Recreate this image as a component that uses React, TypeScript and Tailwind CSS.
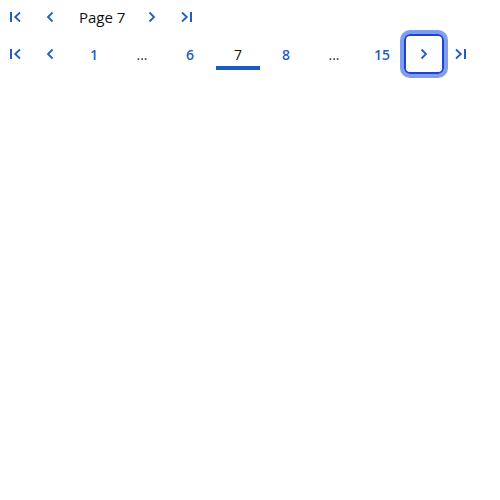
import React from "react";

const BLUE = "#1f5fc4";

function Chev({ dir, bar }: { dir: "left" | "right"; bar?: boolean }) {
  return (
    <svg width="16" height="16" viewBox="0 0 16 16" fill="none">
      {dir === "left" ? (
        <>
          {bar && <line x1="3" y1="3" x2="3" y2="13" stroke={BLUE} strokeWidth="2" />}
          <polyline
            points={bar ? "12,3.5 7.2,8 12,12.5" : "10.5,3.5 6,8 10.5,12.5"}
            stroke={BLUE}
            strokeWidth="1.8"
            fill="none"
          />
        </>
      ) : (
        <>
          <polyline
            points={bar ? "4,3.5 8.8,8 4,12.5" : "5.5,3.5 10,8 5.5,12.5"}
            stroke={BLUE}
            strokeWidth="1.8"
            fill="none"
          />
          {bar && <line x1="13" y1="3" x2="13" y2="13" stroke={BLUE} strokeWidth="2" />}
        </>
      )}
    </svg>
  );
}

function NumBtn({ label, current, className = "" }: { label: string; current?: boolean; className?: string }) {
  return (
    <div
      className={
        "relative w-[44px] h-[40px] flex items-center justify-center text-[14px] " +
        (current ? "text-[#111111] font-medium " : "text-[#1f5fc4] font-semibold ") +
        className
      }
    >
      {label}
      {current && <span className="absolute left-0 right-0 bottom-1 h-1 bg-[#1a5cbf]" />}
    </div>
  );
}

function Dots({ className = "" }: { className?: string }) {
  return (
    <div className={"w-[44px] h-[40px] flex items-center justify-center text-[14px] text-[#333333] " + className}>
      ...
    </div>
  );
}

export default function App() {
  return (
    <div className="w-[500px] h-[500px] bg-white" style={{ fontFamily: '"Open Sans", sans-serif' }}>
      <div className="flex items-center h-[34px]">
        <div className="w-8 h-[34px] flex items-center justify-center">
          <Chev dir="left" bar />
        </div>
        <div className="w-8 h-[34px] ml-[2px] flex items-center justify-center">
          <Chev dir="left" />
        </div>
        <div className="ml-[13px] mr-[11px] text-[15px] text-[#111111]">Page 7</div>
        <div className="w-8 h-[34px] flex items-center justify-center">
          <Chev dir="right" />
        </div>
        <div className="w-8 h-[34px] ml-[2px] flex items-center justify-center">
          <Chev dir="right" bar />
        </div>
      </div>
      <div className="flex items-center h-[40px]">
        <div className="w-8 h-[40px] flex items-center justify-center">
          <Chev dir="left" bar />
        </div>
        <div className="w-8 h-[40px] ml-[2px] flex items-center justify-center">
          <Chev dir="left" />
        </div>
        <NumBtn label="1" className="ml-[6px]" />
        <Dots className="ml-1" />
        <NumBtn label="6" className="ml-1" />
        <NumBtn label="7" current className="ml-1" />
        <NumBtn label="8" className="ml-1" />
        <Dots className="ml-1" />
        <NumBtn label="15" className="ml-1" />
        <div className="w-[40px] h-[40px] flex items-center justify-center rounded-[6px] border-2 border-[#1d43d4] ring-4 ring-[#7f9eee]">
          <Chev dir="right" />
        </div>
        <div className="w-8 h-[40px] flex items-center justify-center">
          <Chev dir="right" bar />
        </div>
      </div>
    </div>
  );
}
